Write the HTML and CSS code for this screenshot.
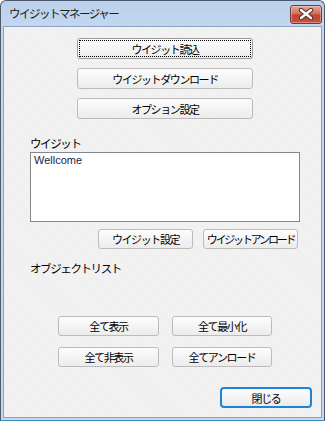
FILE: index.html
```html
<!DOCTYPE html>
<html lang="ja">
<head>
    <meta charset="UTF-8">
    <title>ウイジットマネージャー</title>
    <link rel="stylesheet" href="styles.css">
</head>
<body>
    <div class="window">
        <div class="titlebar">
            <span class="title">ウイジットマネージャー</span>
            <button class="close-btn" title="閉じる">
                <svg width="16" height="12" viewBox="0 0 16 12">
                    <path d="M3 2 L13 10 M13 2 L3 10" stroke="#4a3030" stroke-width="4.4" stroke-linecap="round"/>
                    <path d="M3 2 L13 10 M13 2 L3 10" stroke="#ffffff" stroke-width="2.4" stroke-linecap="round"/>
                </svg>
            </button>
        </div>

        <div class="client">
            <!-- main actions -->
            <div class="main-actions">
                <button class="btn wide focused"><span>ウイジット読込</span></button>
                <button class="btn wide">ウイジットダウンロード</button>
                <button class="btn wide">オプション設定</button>
            </div>

            <div class="label">ウイジット</div>
            <div class="listbox">Wellcome</div>
            <div class="widget-actions">
                <button class="btn small">ウイジット設定</button>
                <button class="btn small tight">ウイジットアンロード</button>
            </div>

            <div class="label objects">オブジェクトリスト</div>

            <div class="all-actions">
                <button class="btn">全て表示</button>
                <button class="btn">全て最小化</button>
                <button class="btn">全て非表示</button>
                <button class="btn">全てアンロード</button>
            </div>

            <div class="footer">
                <button class="btn default">閉じる</button>
            </div>
        </div>
    </div>
</body>
</html>
```

FILE: styles.css
```css
body {
    margin: 0;
    background-color: #ffffff;
    font-family: "Noto Sans CJK JP", sans-serif;
}
.window {
    width: 325px;
    height: 421px;
    box-sizing: border-box;
    border: 1px solid #4c5a6c;
    border-bottom-color: #3d8fc4;
    border-radius: 6px 6px 0 0;
    background: linear-gradient(#bad0ec, #c4d8f0 30px, #c4d8f0);
    padding: 0 2px 2px 2px;
    display: flex;
    flex-direction: column;
}
.titlebar {
    height: 25px;
    display: flex;
    align-items: center;
    justify-content: space-between;
    padding-left: 6px;
    padding-right: 0;
}
.title {
    font-size: 11.5px;
    letter-spacing: -1.5px;
    color: #1b1b1b;
    margin-top: -1px;
}
.close-btn {
    width: 32px;
    height: 19px;
    margin-top: 1px;
    padding: 0;
    border: 1px solid #6d3a36;
    border-radius: 3px;
    background: linear-gradient(#e6a598, #d0705f 45%, #c24430 55%, #c8513c);
    box-shadow: inset 0 0 0 1px rgba(255, 255, 255, 0.35);
    display: flex;
    align-items: center;
    justify-content: center;
}
.client {
    flex: 1;
    border: 1px solid #8aa2c0;
    background-color: #efefef;
    background-image: repeating-linear-gradient(45deg, rgba(255, 255, 255, 0.25) 0 1px, transparent 1px 2px);
    padding: 11px 0 0 26px;
}

.btn {
    font-family: "Noto Sans CJK JP", sans-serif;
    font-size: 11px;
    letter-spacing: -1.4px;
    white-space: nowrap;
    color: #000;
    height: 20px;
    padding: 0;
    border: 1px solid #bcbcbc;
    border-radius: 3px;
    background: linear-gradient(#fdfdfd, #f4f4f4 50%, #ececec);
    box-sizing: border-box;
}
.btn.wide {
    width: 176px;
    height: 21px;
}
.btn.focused {
    border-color: #9a9a9a;
    padding: 1px;
}
.btn.focused span {
    display: block;
    height: 100%;
    border: 1px dotted #000;
    box-sizing: border-box;
    line-height: 16px;
}
.main-actions {
    display: flex;
    flex-direction: column;
    gap: 9px;
    margin-left: 47px;
}

.label {
    font-size: 11.5px;
    letter-spacing: -1.4px;
    color: #000;
    margin-top: 17px;
    height: 14px;
    line-height: 14px;
}
.listbox {
    width: 270px;
    height: 70px;
    margin-top: 2px;
    box-sizing: border-box;
    border: 1px solid #828790;
    background: #fff;
    padding: 1px 3px;
    font-family: "Liberation Sans", sans-serif;
    font-size: 11px;
    color: #22224e;
}
.widget-actions {
    display: flex;
    justify-content: flex-end;
    gap: 10px;
    width: 268px;
    margin-top: 7px;
}
.btn.small {
    width: 95px;
}
.btn.tight {
    letter-spacing: -2.2px;
}

.label.objects {
    margin-top: 12px;
}

.all-actions {
    display: grid;
    grid-template-columns: 101px 100px;
    column-gap: 13px;
    row-gap: 11px;
    margin-top: 41px;
    margin-left: 28px;
}

.footer {
    display: flex;
    justify-content: flex-end;
    padding-right: 9px;
    margin-top: 20px;
}
.btn.default {
    width: 92px;
    height: 21px;
    border: 2px solid #1c84d8;
    border-radius: 4px;
}
```
